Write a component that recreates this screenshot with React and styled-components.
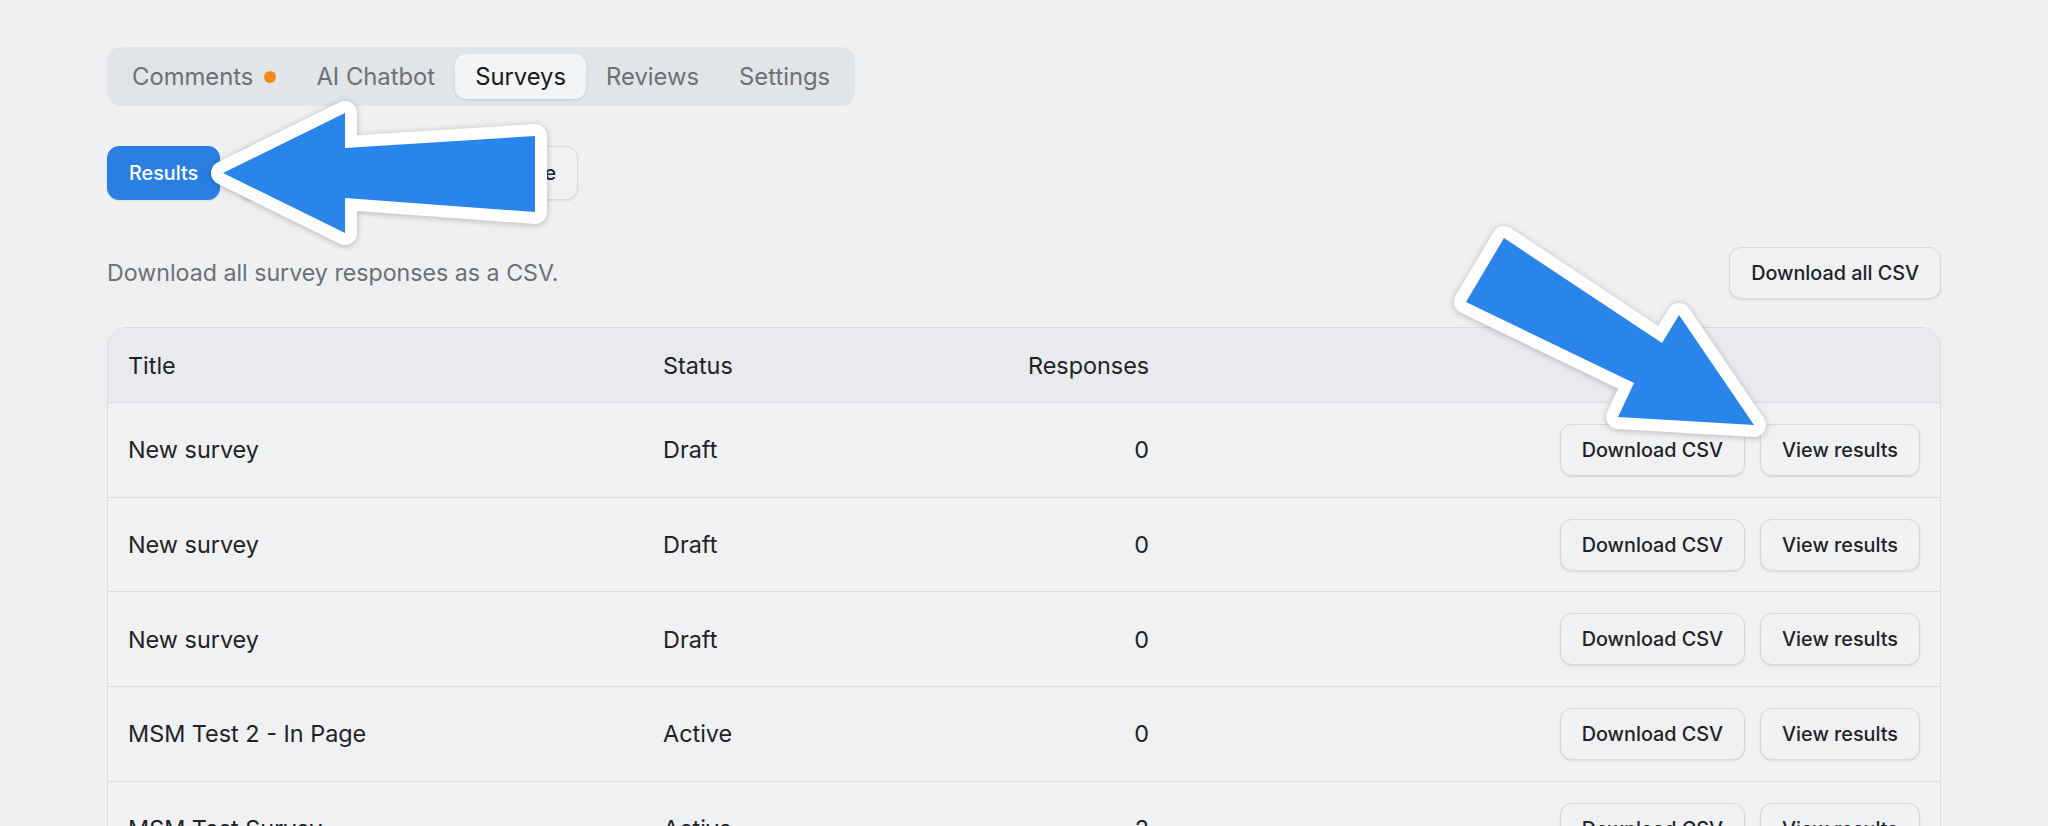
import React from "react";
import styled, { createGlobalStyle } from "styled-components";

const GlobalStyle = createGlobalStyle`
  * {
    margin: 0;
    padding: 0;
    box-sizing: border-box;
  }
  body {
    background: #eef0f2;
    font-family: Inter, "Noto Sans", sans-serif;
    color: #1f2328;
    overflow: hidden;
  }
`

const Page = styled.div`
  position: relative;
  height: 826px;
  padding: 47px 107px 0;
  overflow: hidden;
`

const TabBar = styled.div`
  display: inline-flex;
  align-items: center;
  height: 59px;
  padding: 0 5px;
  background: #e2e5e8;
  border-radius: 14px;
`

const Tab = styled.div`
  display: flex;
  align-items: center;
  gap: 11px;
  height: 45px;
  padding: 0 20px;
  border-radius: 11px;
  font-size: 23.8px;
  color: ${p => (p.active ? "#16191d" : "#6b7076")};
  background: ${p => (p.active ? "#f3f4f6" : "transparent")};
  box-shadow: ${p => (p.active ? "0 1px 3px rgba(0,0,0,0.12)" : "none")};
`

const Dot = styled.span`
  width: 12px;
  height: 12px;
  border-radius: 50%;
  background: #f0891a;
`

const ViewSwitch = styled.div`
  display: flex;
  gap: 18px;
  margin-top: 40px;
`

const Button = styled.button`
  height: ${p => (p.tall ? "54px" : "52px")};
  width: ${p => (p.w ? `${p.w}px` : "auto")};
  text-align: right;
  padding: 0 21px;
  border-radius: 12px;
  font-family: Inter, "Noto Sans", sans-serif;
  font-size: 19.8px;
  font-weight: 500;
  color: ${p => (p.primary ? "#ffffff" : "#1f2328")};
  background: ${p => (p.primary ? "#2a80e2" : "#f0f1f3")};
  border: 1px solid ${p => (p.primary ? "#2a80e2" : "#d5d8dc")};
  box-shadow: 0 1px 2px rgba(0, 0, 0, 0.1);
  white-space: nowrap;
`

const Toolbar = styled.div`
  display: flex;
  align-items: center;
  justify-content: space-between;
  margin-top: 47px;
`

const Description = styled.p`
  font-size: 23.2px;
  color: #6b7076;
`

const Table = styled.div`
  margin-top: 28px;
  border: 1px solid #d9dcdf;
  border-radius: 20px;
  overflow: hidden;
`

const Row = styled.div`
  display: grid;
  grid-template-columns: 535px 365px 121px 1fr;
  align-items: center;
  height: ${p => (p.head ? "74px" : "94.7px")};
  padding: 0 20px;
  font-size: 23.4px;
  background: ${p => (p.head ? "#e8eaed" : "#eff1f3")};
  border-top: ${p => (p.first ? "none" : "1px solid #d9dcdf")};
`

const Num = styled.div`
  text-align: right;
`

const Actions = styled.div`
  display: flex;
  justify-content: flex-end;
  gap: 15px;
`

const Overlay = styled.svg`
  position: absolute;
  left: 0;
  top: 0;
  pointer-events: none;
  filter: drop-shadow(0 1px 3px rgba(0, 0, 0, 0.25));
`

const surveys = [
  { title: "New survey", status: "Draft", responses: 0 },
  { title: "New survey", status: "Draft", responses: 0 },
  { title: "New survey", status: "Draft", responses: 0 },
  { title: "MSM Test 2 - In Page", status: "Active", responses: 0 },
  { title: "MSM Test Survey", status: "Active", responses: 2 },
]

export default function App() {
  return (
    <>
      <GlobalStyle />
      <Page>
        <TabBar>
          <Tab>
            Comments <Dot />
          </Tab>
          <Tab>AI Chatbot</Tab>
          <Tab active>Surveys</Tab>
          <Tab>Reviews</Tab>
          <Tab>Settings</Tab>
        </TabBar>

        <ViewSwitch>
          <Button primary tall>Results</Button>
          <Button tall w={340}>Create survey template</Button>
        </ViewSwitch>

        <Toolbar>
          <Description>Download all survey responses as a CSV.</Description>
          <Button>Download all CSV</Button>
        </Toolbar>

        <Table>
          <Row head first>
            <div>Title</div>
            <div>Status</div>
            <Num>Responses</Num>
            <div />
          </Row>
          {surveys.map((s, i) => (
            <Row key={i}>
              <div>{s.title}</div>
              <div>{s.status}</div>
              <Num>{s.responses}</Num>
              <Actions>
                <Button>Download CSV</Button>
                <Button>View results</Button>
              </Actions>
            </Row>
          ))}
        </Table>

        <Overlay width="2048" height="826" viewBox="0 0 2048 826">
          <g fill="#2a85ea" stroke="#ffffff" strokeWidth="24" strokeLinejoin="round" paintOrder="stroke">
            <polygon points="223,173 345,113 345,148 535,136 535,212 345,198 345,233" />
            <polygon points="1504,238 1662,343 1679,315 1754,425 1618,417 1634,383 1466,302" />
          </g>
        </Overlay>
      </Page>
    </>
  );
}
